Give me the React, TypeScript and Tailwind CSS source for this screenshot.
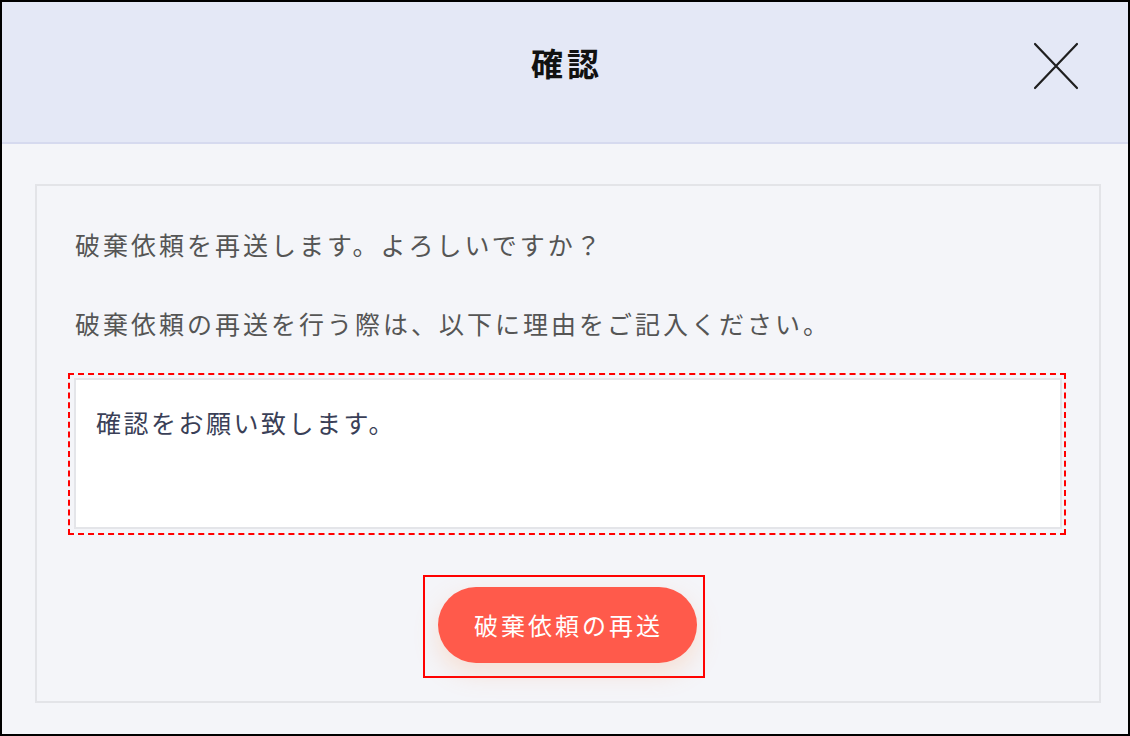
import { useState } from "react";

const jp = { fontFamily: '"Noto Sans CJK JP", "Noto Sans", sans-serif' };

function CloseIcon() {
  return (
    <svg width="46" height="48" viewBox="0 0 46 48" fill="none">
      <path d="M2 2L44 46M44 2L2 46" stroke="#1f1f1f" strokeWidth="2.2" strokeLinecap="round" />
    </svg>
  );
}

export default function App() {
  const [reason, setReason] = useState("確認をお願い致します。");

  return (
    <div
      className="flex h-[736px] w-[1130px] flex-col border-2 border-black bg-[#f4f5f9]"
      style={jp}
    >
      <header className="relative flex h-[142px] shrink-0 items-center justify-center border-b-2 border-[#d6daef] bg-[#e4e8f6]">
        <h1 className="mt-[-20px] pl-[4px] text-[32px] font-bold tracking-[4px] text-[#111]">確認</h1>
        <button className="absolute right-[49px] top-[40px]" aria-label="閉じる">
          <CloseIcon />
        </button>
      </header>

      <div className="flex-1 pb-[31px] pl-[33px] pr-[27px] pt-[40px]">
        <div className="flex h-full flex-col border-2 border-[#e3e4e8] pl-[31px] pr-[33px] pt-[33px]">
          <p className="pl-[7px] text-[25px] leading-[50px] tracking-[3px] text-[#555]">
            破棄依頼を再送します。よろしいですか？
          </p>
          <p className="mt-[29px] pl-[7px] text-[25px] leading-[50px] tracking-[3px] text-[#555]">
            破棄依頼の再送を行う際は、以下に理由をご記入ください。
          </p>

          <div className="mt-[25px] border-2 border-dashed border-[#ff0000] pb-[4px] pl-[4px] pr-[2px] pt-[3px]">
            <textarea
              value={reason}
              onChange={(e) => setReason(e.target.value)}
              className="block h-[151px] w-full resize-none border-2 border-[#e4e5e9] bg-white px-[20px] pt-[26px] text-[25px] leading-[32px] tracking-[2.5px] text-[#3a3f57] outline-none"
              style={jp}
            />
          </div>

          <div className="mt-[40px] flex justify-center pr-[7px]">
            <div className="border-2 border-[#ff0000] pb-[13px] pl-[13px] pr-[6px] pt-[10px]">
              <button className="h-[76px] w-[259px] rounded-full bg-[#ff5a4b] pl-[3px] text-[24px] tracking-[3px] text-white shadow-[0_10px_24px_rgba(255,160,100,0.25)]">
                破棄依頼の再送
              </button>
            </div>
          </div>
        </div>
      </div>
    </div>
  );
}
